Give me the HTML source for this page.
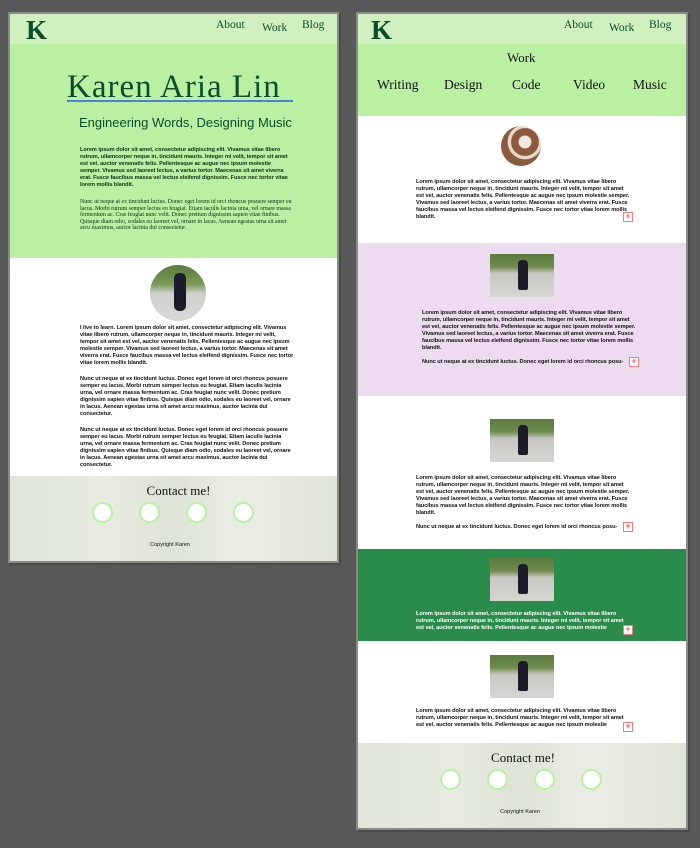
<!DOCTYPE html>
<html><head><meta charset="utf-8"><style>
*{margin:0;padding:0;box-sizing:border-box}
body{width:700px;height:848px;background:#585858;position:relative;overflow:hidden;font-family:"Liberation Sans",sans-serif}
.a{position:absolute}
.panel{position:absolute;background:#fff;border:2px solid #8a8a8a;overflow:hidden;box-shadow:2px 2px 0 #4a4a4a}
.serif{font-family:"Liberation Serif",serif}
.txt{position:absolute;font-size:5.6px;line-height:7.1px;font-weight:bold;color:#111;letter-spacing:-0.05px}
.k{font-family:"Liberation Serif",serif;color:#0b4d2a;font-size:27px;font-weight:bold;line-height:27px}
.nav{font-family:"Liberation Serif",serif;color:#0b4d2a;font-size:11.5px}
.circ{position:absolute;width:21px;height:21px;border-radius:50%;background:#fff;border:2px solid #b9f0a2}
.foot{background:linear-gradient(90deg,#dfe5d8,#e7ebe0 30%,#dde3d5 50%,#eaede4 70%,#dfe5d6)}
.photo{position:absolute;width:64px;height:43px;background:linear-gradient(180deg,#5d7a3f 0%,#6e8c4f 30%,#c7c7c2 45%,#d6d6d2 100%)}
.photo:after{content:"";position:absolute;left:28px;top:6px;width:10px;height:30px;background:#1b1b2a;border-radius:4px 4px 2px 2px}
.plus{position:absolute;width:10px;height:10px;border:1.5px solid #f08080;background:#fff;color:#f06060;font-size:9px;line-height:7px;text-align:center;font-weight:bold}
.w{color:#fff}
</style></head><body>

<!-- LEFT PANEL -->
<div class="panel" style="left:8px;top:12px;width:331px;height:551px">
  <div class="a" style="left:0;top:0;width:327px;height:30px;background:#d0f0c0"></div>
  <div class="a" style="left:0;top:30px;width:327px;height:214px;background:#b9f0a2"></div>
  <div class="a k" style="left:16px;top:3px">K</div>
  <div class="a nav" style="left:206px;top:5px">About</div>
  <div class="a nav" style="left:252px;top:8px">Work</div>
  <div class="a nav" style="left:292px;top:5px">Blog</div>
  <div class="a serif" style="left:57px;top:55px;font-size:33px;color:#0b4d2a;letter-spacing:1px;white-space:nowrap">Karen Aria Lin</div>
  <div class="a" style="left:57px;top:86px;width:226px;height:2px;background:#4a80e0"></div>
  <div class="a" style="left:69px;top:101px;font-size:13px;color:#0b4d2a;white-space:nowrap">Engineering Words, Designing Music</div>
  <div class="txt" style="left:70px;top:133px;width:210px;color:#0d2f18">Lorem ipsum dolor sit amet, consectetur adipiscing elit. Vivamus vitae libero rutrum, ullamcorper neque in, tincidunt mauris. Integer mi velit, tempor sit amet est vel, auctor venenatis felis. Pellentesque ac augue nec ipsum molestie semper. Vivamus sed laoreet lectus, a varius tortor. Maecenas sit amet viverra erat. Fusce faucibus massa vel lectus eleifend dignissim. Fusce nec tortor vitae lorem mollis blandit.</div>
  <div class="txt serif" style="left:70px;top:185px;width:214px;font-weight:normal;color:#0d2f18;font-size:6px;line-height:6.5px">Nunc ut neque at ex tincidunt luctus. Donec eget lorem id orci rhoncus posuere semper eu lacus. Morbi rutrum semper lectus eu feugiat. Etiam iaculis lacinia urna, vel ornare massa fermentum ac. Cras feugiat nunc velit. Donec pretium dignissim sapien vitae finibus. Quisque diam odio, sodales eu laoreet vel, ornare in lacus. Aenean egestas urna sit amet arcu maximus, auctor lacinia dui consectetur.</div>
  <div class="a" style="left:140px;top:251px;width:56px;height:56px;border-radius:50%;overflow:hidden;background:linear-gradient(180deg,#5d7a3f 0%,#7b9a5a 35%,#cfcfcb 50%,#d8d8d4 100%)"><div class="a" style="left:24px;top:8px;width:12px;height:38px;background:#1b1b2a;border-radius:5px"></div></div>
  <div class="txt" style="left:70px;top:311px;width:214px">I live to learn. Lorem ipsum dolor sit amet, consectetur adipiscing elit. Vivamus vitae libero rutrum, ullamcorper neque in, tincidunt mauris. Integer mi velit, tempor sit amet est vel, auctor venenatis felis. Pellentesque ac augue nec ipsum molestie semper. Vivamus sed laoreet lectus, a varius tortor. Maecenas sit amet viverra erat. Fusce faucibus massa vel lectus eleifend dignissim. Fusce nec tortor vitae lorem mollis blandit.</div>
  <div class="txt" style="left:70px;top:362px;width:214px">Nunc ut neque at ex tincidunt luctus. Donec eget lorem id orci rhoncus posuere semper eu lacus. Morbi rutrum semper lectus eu feugiat. Etiam iaculis lacinia urna, vel ornare massa fermentum ac. Cras feugiat nunc velit. Donec pretium dignissim sapien vitae finibus. Quisque diam odio, sodales eu laoreet vel, ornare in lacus. Aenean egestas urna sit amet arcu maximus, auctor lacinia dui consectetur.</div>
  <div class="txt" style="left:70px;top:413px;width:214px">Nunc ut neque at ex tincidunt luctus. Donec eget lorem id orci rhoncus posuere semper eu lacus. Morbi rutrum semper lectus eu feugiat. Etiam iaculis lacinia urna, vel ornare massa fermentum ac. Cras feugiat nunc velit. Donec pretium dignissim sapien vitae finibus. Quisque diam odio, sodales eu laoreet vel, ornare in lacus. Aenean egestas urna sit amet arcu maximus, auctor lacinia dui consectetur.</div>
  <div class="a foot" style="left:0;top:462px;width:327px;height:87px"></div>
  <div class="a serif" style="left:0;top:469px;width:337px;text-align:center;font-size:13px;color:#111">Contact me!</div>
  <div class="circ" style="left:82px;top:488px"></div>
  <div class="circ" style="left:129px;top:488px"></div>
  <div class="circ" style="left:176px;top:488px"></div>
  <div class="circ" style="left:223px;top:488px"></div>
  <div class="a" style="left:0;top:528px;width:320px;text-align:center;font-size:5.5px;color:#111">Copyright Karen</div>
</div>

<!-- RIGHT PANEL -->
<div class="panel" style="left:356px;top:12px;width:332px;height:818px">
  <div class="a" style="left:0;top:0;width:328px;height:30px;background:#d0f0c0"></div>
  <div class="a" style="left:0;top:30px;width:328px;height:72px;background:#b9f0a2"></div>
  <div class="a k" style="left:13px;top:3px">K</div>
  <div class="a nav" style="left:206px;top:5px">About</div>
  <div class="a nav" style="left:251px;top:8px">Work</div>
  <div class="a nav" style="left:291px;top:5px">Blog</div>
  <div class="a serif" style="left:149px;top:36px;font-size:13px;color:#111">Work</div>
  <div class="a serif" style="left:19px;top:63px;font-size:13.5px;color:#111">Writing</div>
  <div class="a serif" style="left:86px;top:63px;font-size:13.5px;color:#111">Design</div>
  <div class="a serif" style="left:154px;top:63px;font-size:13.5px;color:#111">Code</div>
  <div class="a serif" style="left:215px;top:63px;font-size:13.5px;color:#111">Video</div>
  <div class="a serif" style="left:275px;top:63px;font-size:13.5px;color:#111">Music</div>
  <div class="a" style="left:143px;top:112px;width:40px;height:40px;border-radius:50%;background:radial-gradient(circle at 60% 40%,#f2e8e0 0 18%,#8c5a3c 20% 40%,#e8d8cc 42% 50%,#8a5b3e 52%)"></div>
  <div class="txt" style="left:58px;top:165px;width:214px">Lorem ipsum dolor sit amet, consectetur adipiscing elit. Vivamus vitae libero rutrum, ullamcorper neque in, tincidunt mauris. Integer mi velit, tempor sit amet est vel, auctor venenatis felis. Pellentesque ac augue nec ipsum molestie semper. Vivamus sed laoreet lectus, a varius tortor. Maecenas sit amet viverra erat. Fusce faucibus massa vel lectus eleifend dignissim. Fusce nec tortor vitae lorem mollis blandit.</div>
  <div class="plus" style="left:265px;top:198px">+</div>

  <div class="a" style="left:0;top:229px;width:328px;height:153px;background:#eddbf0"></div>
  <div class="photo" style="left:132px;top:240px"></div>
  <div class="txt" style="left:64px;top:296px;width:214px">Lorem ipsum dolor sit amet, consectetur adipiscing elit. Vivamus vitae libero rutrum, ullamcorper neque in, tincidunt mauris. Integer mi velit, tempor sit amet est vel, auctor venenatis felis. Pellentesque ac augue nec ipsum molestie semper. Vivamus sed laoreet lectus, a varius tortor. Maecenas sit amet viverra erat. Fusce faucibus massa vel lectus eleifend dignissim. Fusce nec tortor vitae lorem mollis blandit.</div>
  <div class="txt" style="left:64px;top:345px;width:206px;white-space:nowrap;overflow:hidden">Nunc ut neque at ex tincidunt luctus. Donec eget lorem id orci rhoncus posu-</div>
  <div class="plus" style="left:271px;top:343px">+</div>

  <div class="photo" style="left:132px;top:405px"></div>
  <div class="txt" style="left:58px;top:461px;width:214px">Lorem ipsum dolor sit amet, consectetur adipiscing elit. Vivamus vitae libero rutrum, ullamcorper neque in, tincidunt mauris. Integer mi velit, tempor sit amet est vel, auctor venenatis felis. Pellentesque ac augue nec ipsum molestie semper. Vivamus sed laoreet lectus, a varius tortor. Maecenas sit amet viverra erat. Fusce faucibus massa vel lectus eleifend dignissim. Fusce nec tortor vitae lorem mollis blandit.</div>
  <div class="txt" style="left:58px;top:510px;width:206px;white-space:nowrap;overflow:hidden">Nunc ut neque at ex tincidunt luctus. Donec eget lorem id orci rhoncus posu-</div>
  <div class="plus" style="left:265px;top:508px">+</div>

  <div class="a" style="left:0;top:535px;width:328px;height:92px;background:#2a8c4a"></div>
  <div class="photo" style="left:132px;top:544px"></div>
  <div class="txt w" style="left:58px;top:597px;width:214px;height:21px;overflow:hidden">Lorem ipsum dolor sit amet, consectetur adipiscing elit. Vivamus vitae libero rutrum, ullamcorper neque in, tincidunt mauris. Integer mi velit, tempor sit amet est vel, auctor venenatis felis. Pellentesque ac augue nec ipsum molestie</div>
  <div class="plus" style="left:265px;top:611px">+</div>

  <div class="photo" style="left:132px;top:641px"></div>
  <div class="txt" style="left:58px;top:694px;width:214px;height:21px;overflow:hidden">Lorem ipsum dolor sit amet, consectetur adipiscing elit. Vivamus vitae libero rutrum, ullamcorper neque in, tincidunt mauris. Integer mi velit, tempor sit amet est vel, auctor venenatis felis. Pellentesque ac augue nec ipsum molestie</div>
  <div class="plus" style="left:265px;top:708px">+</div>

  <div class="a foot" style="left:0;top:729px;width:328px;height:87px"></div>
  <div class="a serif" style="left:0;top:736px;width:330px;text-align:center;font-size:13px;color:#111">Contact me!</div>
  <div class="circ" style="left:82px;top:755px"></div>
  <div class="circ" style="left:129px;top:755px"></div>
  <div class="circ" style="left:176px;top:755px"></div>
  <div class="circ" style="left:223px;top:755px"></div>
  <div class="a" style="left:0;top:795px;width:324px;text-align:center;font-size:5.5px;color:#111">Copyright Karen</div>
</div>
</body></html>
